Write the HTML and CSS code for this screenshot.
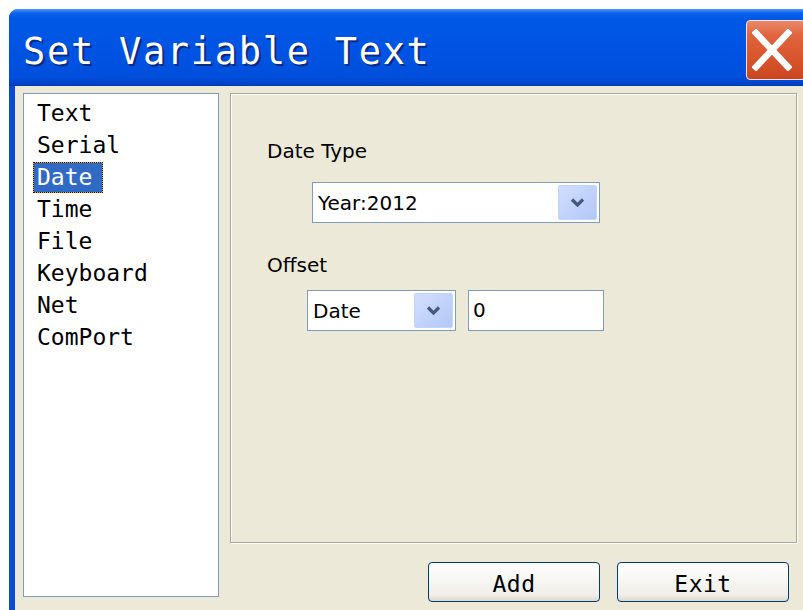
FILE: index.html
```html
<!DOCTYPE html>
<html lang="en">
<head>
<meta charset="utf-8">
<title>Set Variable Text</title>
<link rel="stylesheet" href="styles.css">
</head>
<body>
<div class="window">
  <div class="titlebar">
    <span class="title">Set Variable Text</span>
    <button class="close" aria-label="Close">
      <svg width="40" height="42" viewBox="0 0 40 42">
        <path d="M4 4 L36 38 M36 4 L4 38" stroke="#fff" stroke-width="6.5" stroke-linecap="square" fill="none"/>
      </svg>
    </button>
  </div>
  <div class="client">
    <ul class="list">
      <li><span class="item">Text</span></li>
      <li><span class="item">Serial</span></li>
      <li><span class="item selected">Date</span></li>
      <li><span class="item">Time</span></li>
      <li><span class="item">File</span></li>
      <li><span class="item">Keyboard</span></li>
      <li><span class="item">Net</span></li>
      <li><span class="item">ComPort</span></li>
    </ul>
    <div class="panel">
      <div class="label">Date Type</div>
      <div class="combo combo-wide">
        <span class="combo-value">Year:2012</span>
        <span class="drop">
          <svg width="15" height="9" viewBox="0 0 15 9"><path d="M2 1.5 L7.5 7 L13 1.5" stroke="#46597c" stroke-width="3.2" fill="none"/></svg>
        </span>
      </div>
      <div class="label label-offset">Offset</div>
      <div class="offset-row">
        <div class="combo combo-small">
          <span class="combo-value">Date</span>
          <span class="drop">
            <svg width="15" height="9" viewBox="0 0 15 9"><path d="M2 1.5 L7.5 7 L13 1.5" stroke="#46597c" stroke-width="3.2" fill="none"/></svg>
          </span>
        </div>
        <div class="field">0</div>
      </div>
    </div>
    <div class="actions">
      <button class="btn">Add</button>
      <button class="btn">Exit</button>
    </div>
  </div>
</div>
</body>
</html>
```

FILE: styles.css
```css
body {
  margin: 0;
  background: #ffffff;
  width: 803px;
  height: 610px;
  overflow: hidden;
}

.window {
  margin: 9px 0 0 9px;
  width: 812px;
  height: 601px;
  background: #0a4bd6;
  border-top-left-radius: 9px;
  overflow: hidden;
  display: flex;
  flex-direction: column;
}

/* caption bar */
.titlebar {
  flex: none;
  height: 77px;
  box-sizing: border-box;
  padding-right: 15px;
  display: flex;
  align-items: flex-start;
  background: linear-gradient(to bottom,
    #4a94f8 0px, #2d7ef6 2px, #0c62ee 4px, #0058e7 9px,
    #0054e3 50%, #004fdc 88%, #0044cc 96%, #003bb6 100%);
}

.title {
  flex: 1;
  margin-top: 20px;
  padding-left: 14px;
  font-family: "DejaVu Sans Mono", monospace;
  font-size: 37px;
  line-height: 45px;
  letter-spacing: 1.7px;
  color: #ffffff;
  text-shadow: 2px 2px 0 #0a2a82;
  white-space: nowrap;
}

.close {
  margin-top: 11px;
  width: 60px;
  height: 60px;
  padding: 0 8px 0 0;
  box-sizing: border-box;
  border: 1px solid #f4e2dc;
  border-radius: 4px;
  background: linear-gradient(to bottom, #e88a6a 0%, #e0643e 25%, #d6532a 70%, #c94622 100%);
  display: flex;
  align-items: center;
  justify-content: center;
}

/* client area */
.client {
  flex: 1;
  margin-left: 6px;
  background: #ece9d8;
  padding: 7px 0 0 8px;
  display: grid;
  grid-template-columns: 196px 567px;
  grid-template-rows: 450px auto;
  column-gap: 11px;
  align-content: start;
}

.list {
  grid-row: 1 / 3;
  grid-column: 1;
  margin: 0;
  height: 504px;
  box-sizing: border-box;
  border: 1px solid #7f9db9;
  background: #ffffff;
  list-style: none;
  padding: 3px 0 0 9px;
  font-family: "DejaVu Sans Mono", monospace;
  font-size: 23px;
  color: #000000;
}

.list li {
  height: 32px;
  line-height: 32px;
}

.item {
  display: inline-block;
  padding-left: 4px;
}

.item.selected {
  width: 70px;
  height: 31px;
  line-height: 31px;
  margin-top: 1px;
  box-sizing: border-box;
  background: #316ac5;
  color: #ffffff;
  box-shadow: inset 0 0 0 1px #e3a53c;
  outline: 1px dotted #1a1a1a;
  outline-offset: -1px;
  vertical-align: top;
}

/* group panel */
.panel {
  grid-column: 2;
  grid-row: 1;
  box-sizing: border-box;
  border: 1px solid #aca899;
  box-shadow: inset 1px 1px 0 #ffffff, 1px 1px 0 #ffffff;
  padding: 46px 0 0 36px;
  font-family: "DejaVu Sans", sans-serif;
  font-size: 20px;
  color: #000000;
}

.label {
  line-height: 22px;
}

.label-offset {
  margin-top: 31px;
}

.combo {
  display: flex;
  align-items: center;
  height: 41px;
  box-sizing: border-box;
  border: 1px solid #7f9db9;
  background: #ffffff;
  padding: 2px;
}

.combo-wide {
  width: 288px;
  margin: 20px 0 0 45px;
}

.combo-value {
  flex: 1;
  padding-left: 3px;
}

.drop {
  width: 39px;
  height: 35px;
  box-sizing: border-box;
  border: 1px solid #c3d3fd;
  border-radius: 2px;
  background: linear-gradient(135deg, #d2defc 0%, #c2d3fb 50%, #b3c8f7 100%);
  display: flex;
  align-items: center;
  justify-content: center;
}

.offset-row {
  display: flex;
  gap: 12px;
  margin: 14px 0 0 40px;
}

.combo-small {
  width: 149px;
}

.field {
  width: 136px;
  height: 41px;
  box-sizing: border-box;
  border: 1px solid #7f9db9;
  background: #ffffff;
  padding-left: 4px;
  line-height: 39px;
}

/* dialog buttons */
.actions {
  grid-column: 2;
  grid-row: 2;
  margin-top: 19px;
  padding-right: 8px;
  display: flex;
  justify-content: flex-end;
  gap: 17px;
}

.btn {
  width: 172px;
  height: 40px;
  padding: 4px 0 0;
  border: 1px solid #003c74;
  border-radius: 4px;
  background: linear-gradient(to bottom, #ffffff 0%, #f7f7f4 40%, #efeee8 85%, #dcd7ca 100%);
  font-family: "DejaVu Sans Mono", monospace;
  font-size: 23px;
  letter-spacing: 0.5px;
  color: #000000;
}
```
